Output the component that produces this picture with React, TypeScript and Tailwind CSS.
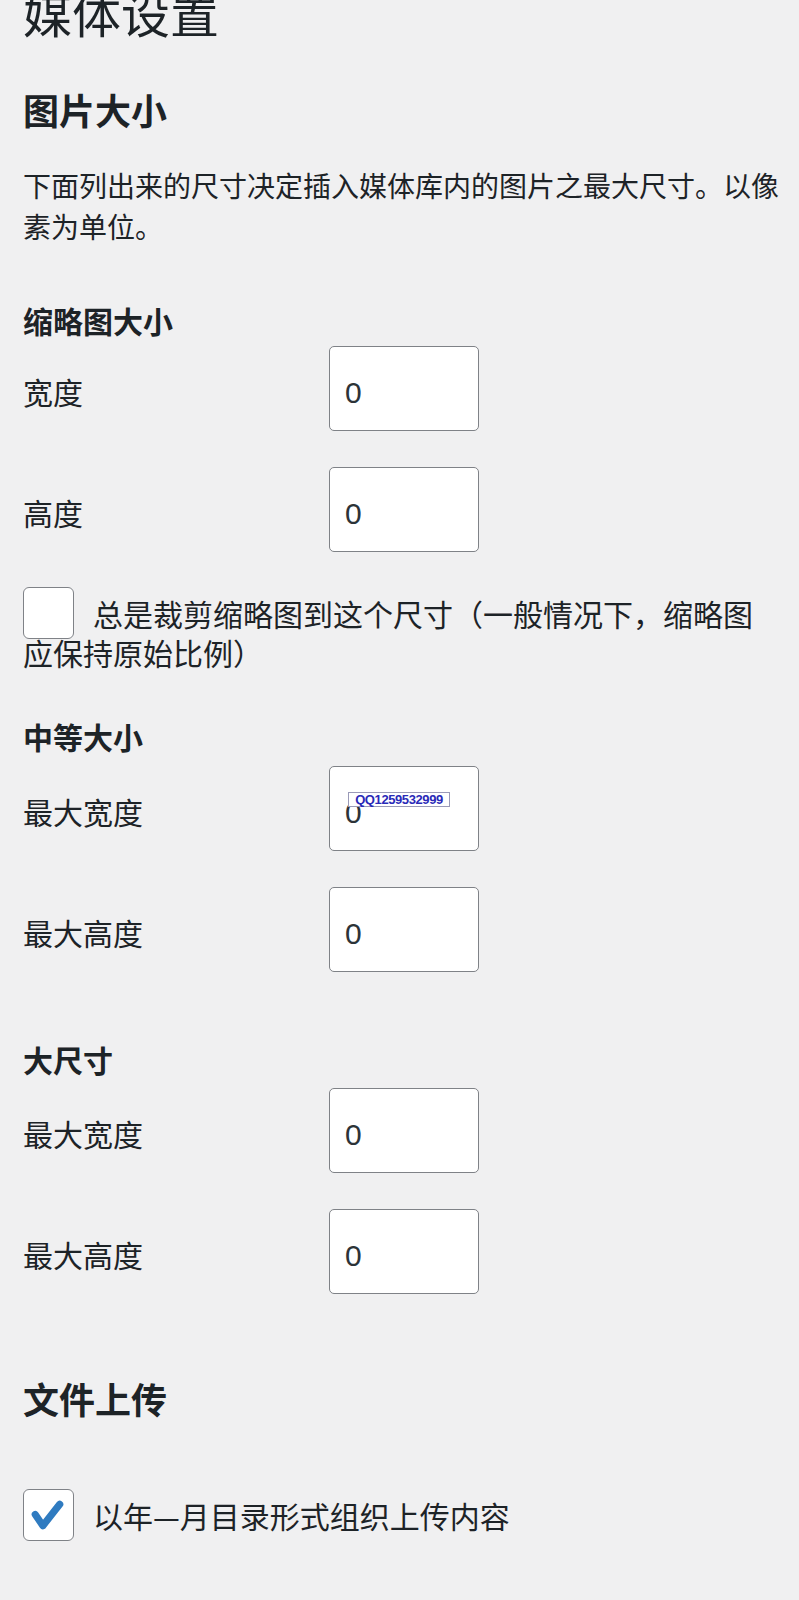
import React from "react";

const cjk = "font-['Noto_Sans_CJK_SC','Noto_Sans',sans-serif]";

function SizeRow({ label, watermark = false }: { label: string; watermark?: boolean }) {
  return (
    <div className="flex items-start">
      <label className="mt-[30px] w-[306px] shrink-0 text-[30px] leading-[30px]">{label}</label>
      <div className="relative">
        <input
          className="block h-[85px] w-[150px] rounded-[5px] border-[1.5px] border-[#7f8287] bg-white pl-[15px] pt-[9px] font-['Liberation_Sans',Arial,sans-serif] text-[30px] text-[#2c3338] outline-none"
          defaultValue="0"
          type="text"
        />
        {watermark && (
          <span className="absolute left-[19px] top-[26px] flex h-[15px] w-[102px] items-center justify-center border border-[#9a9ab8] bg-white font-['Liberation_Sans',Arial,sans-serif] text-[13px] leading-none font-bold tracking-[-0.4px] text-[#2a2ab8]">
            QQ1259532999
          </span>
        )}
      </div>
    </div>
  );
}

export default function App() {
  return (
    <div className={`flow-root min-h-screen bg-[#f0f0f1] pl-[23px] pr-[18px] pb-[60px] text-[#1d2327] ${cjk}`}>
      <h1 className="-mt-[13px] text-[49px] leading-[49px] font-normal">媒体设置</h1>

      <h2 className="mt-[55px] text-[36px] leading-[36px] font-bold">图片大小</h2>
      <p className="mt-[38px] text-[28px] leading-[41px]">
        下面列出来的尺寸决定插入媒体库内的图片之最大尺寸。以像素为单位。
      </p>

      <h3 className="mt-[58px] text-[30px] leading-[30px] font-bold">缩略图大小</h3>
      <div className="mt-[11px]">
        <SizeRow label="宽度" />
      </div>
      <div className="mt-[36px]">
        <SizeRow label="高度" />
      </div>

      <p className="mt-[42px] text-[30px] leading-[39px]">
        <span className="-my-[7px] mr-[19px] inline-block h-[52px] w-[51px] rounded-[6px] border-[1.5px] border-[#7f8287] bg-white align-[-6px]" />
        总是裁剪缩略图到这个尺寸（一般情况下，缩略图应保持原始比例）
      </p>

      <h3 className="mt-[49px] text-[30px] leading-[30px] font-bold">中等大小</h3>
      <div className="mt-[15px]">
        <SizeRow label="最大宽度" watermark />
      </div>
      <div className="mt-[36px]">
        <SizeRow label="最大高度" />
      </div>

      <h3 className="mt-[72px] text-[30px] leading-[30px] font-bold">大尺寸</h3>
      <div className="mt-[14px]">
        <SizeRow label="最大宽度" />
      </div>
      <div className="mt-[36px]">
        <SizeRow label="最大高度" />
      </div>

      <h2 className="mt-[86px] text-[36px] leading-[36px] font-bold">文件上传</h2>
      <div className="mt-[73px] flex items-center">
        <span className="mr-[19px] flex h-[52px] w-[51px] shrink-0 rounded-[6px] border-[1.5px] border-[#7f8287] bg-white">
          <svg className="h-full w-full" viewBox="0 0 48 49" fill="none">
            <path
              d="M11 24 L18.5 35 L35 14"
              stroke="#2f7bc0"
              strokeWidth="7"
              strokeLinecap="round"
              strokeLinejoin="round"
            />
          </svg>
        </span>
        <span className="text-[30px] leading-[39px]">以年—月目录形式组织上传内容</span>
      </div>
    </div>
  );
}
